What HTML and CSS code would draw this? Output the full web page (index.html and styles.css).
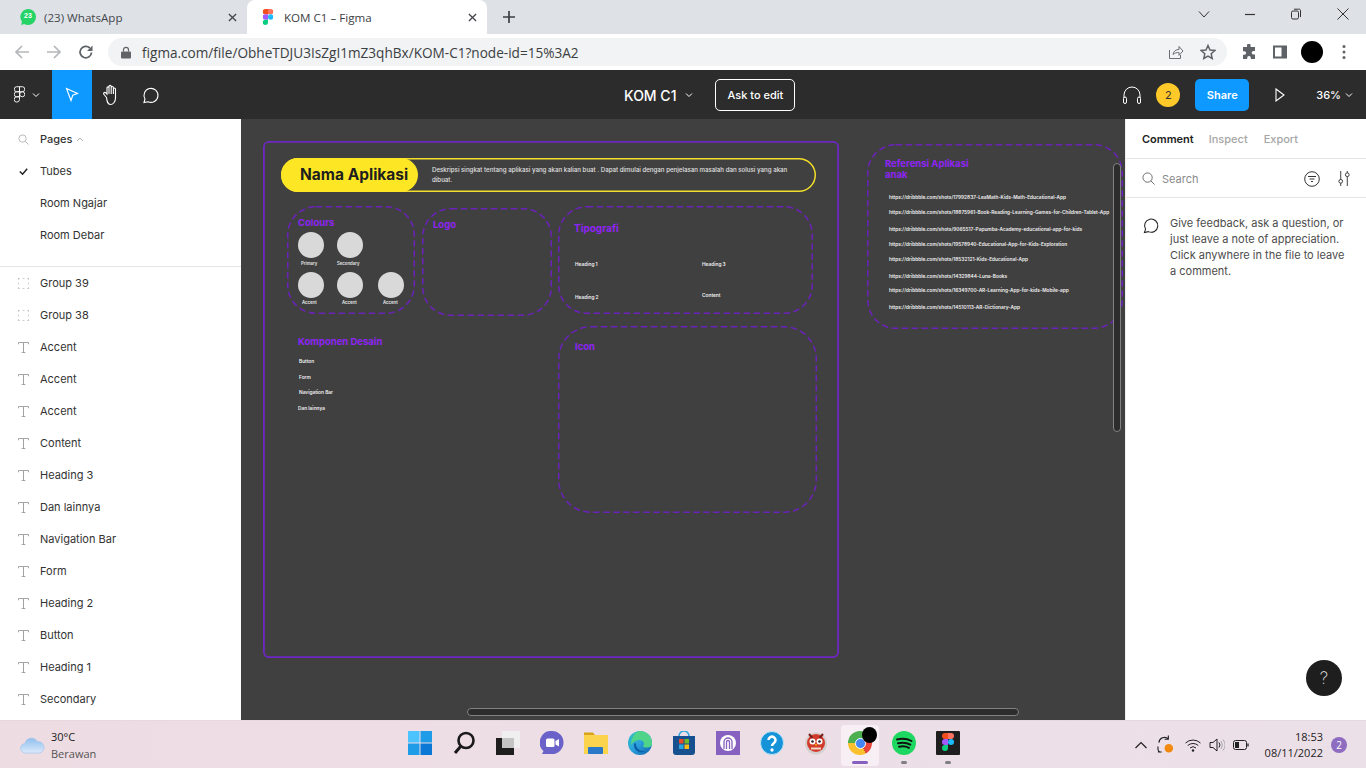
FILE: index.html
```html
<!DOCTYPE html>
<html lang="en">
<head>
<meta charset="utf-8">
<title>KOM C1 – Figma</title>
<link rel="stylesheet" href="styles.css">
</head>
<body>
<svg class="sprite" aria-hidden="true">
  <defs>
    <symbol id="i-t" viewBox="0 0 12 12"><path d="M.5 2.500V.5h11v2M6 .5v11M4 11.500h4" fill="none" stroke="#999"/></symbol>
    <symbol id="i-g" viewBox="0 0 12 12"><path d="M0 .5h2M5 .5h2M10 .5h2M0 11.500h2M5 11.500h2M10 11.500h2M.5 0v2M.5 5v2M.5 10v2M11.500 0v2M11.500 5v2M11.500 10v2" fill="none" stroke="#c4c4c4"/></symbol>
    <symbol id="i-fig" viewBox="0 0 24 36"><path fill="#f24e1e" d="M6 0h6v12H6a6 6 0 0 1 0-12z"/><path fill="#ff7262" d="M12 0h6a6 6 0 0 1 0 12h-6z"/><path fill="#a259ff" d="M6 12h6v12H6a6 6 0 0 1 0-12z"/><circle fill="#1abcfe" cx="18" cy="18" r="6"/><path fill="#0acf83" d="M6 24h6v6a6 6 0 1 1-6-6z"/></symbol>
  </defs>
</svg>

<header class="tabstrip">
  <div class="tab">
    <svg class="fav" viewBox="0 0 16 16"><path fill="#25d366" d="M8 0a8 8 0 0 1 0 16c-1.400 0-2.700-.4-3.800-1L1 16l1-3.200A8 8 0 0 1 8 0z"/></svg>
    <span class="fav-num">23</span>
    <span class="tab-title">(23) WhatsApp</span>
    <svg class="tab-x" viewBox="0 0 10 10"><path d="M1 1l8 8M9 1l-8 8" stroke="#45484d" stroke-width="1.500"/></svg>
  </div>
  <div class="tab tab-active">
    <svg class="fav" viewBox="0 0 24 36"><use href="#i-fig"/></svg>
    <span class="tab-title">KOM C1 – Figma</span>
    <svg class="tab-x" viewBox="0 0 10 10"><path d="M1 1l8 8M9 1l-8 8" stroke="#45484d" stroke-width="1.500"/></svg>
  </div>
  <svg class="newtab" viewBox="0 0 12 12"><path d="M6 0v12M0 6h12" stroke="#3c4043" stroke-width="1.700"/></svg>
  <div class="winbtns">
    <svg class="winb" viewBox="0 0 12 12"><path d="M1 3.500l5 5.500 5-5.500" fill="none" stroke="#333"/></svg>
    <svg class="winb" viewBox="0 0 12 12"><path d="M1 6.500h10" stroke="#333" stroke-width="1.200"/></svg>
    <svg class="winb" viewBox="0 0 12 12"><rect x="1.500" y="3" width="7" height="8" rx="1.500" fill="none" stroke="#333"/><path d="M4 1.200h4.500A1.500 1.500 0 0 1 10.500 3v6" fill="none" stroke="#333"/></svg>
    <svg class="winb" viewBox="0 0 12 12"><path d="M.5.500l11 11M11.500.500l-11 11" stroke="#333"/></svg>
  </div>
</header>

<nav class="addrrow">
  <svg class="nav-ic" viewBox="0 0 16 16"><path d="M15 8H2M8 2L2 8l6 6" fill="none" stroke="#b4b6b9" stroke-width="1.700"/></svg>
  <svg class="nav-ic" viewBox="0 0 16 16"><path d="M1 8h13M8 2l6 6-6 6" fill="none" stroke="#b4b6b9" stroke-width="1.700"/></svg>
  <svg class="nav-ic" viewBox="0 0 16 16"><path d="M13.500 8.500A5.700 5.700 0 1 1 11.800 4" fill="none" stroke="#5f6368" stroke-width="1.800"/><path d="M14.500 1.500v5.500H9z" fill="#5f6368"/></svg>
  <div class="omnibox">
    <svg class="lock" viewBox="0 0 10 12"><rect y="5" width="10" height="7" rx="1" fill="#5f6368"/><path d="M2.500 5V3.300a2.500 2.500 0 0 1 5 0V5" fill="none" stroke="#5f6368" stroke-width="1.200"/></svg>
    <span class="url">figma.com/file/ObheTDJU3IsZgI1mZ3qhBx/KOM-C1?node-id=15%3A2</span>
    <svg class="omni-ic" viewBox="0 0 16 16"><path d="M1.500 6v8.500h11V11" fill="none" stroke="#6a6d72"/><path d="M5 10.500c.5-3.500 3-5 6-5V2.500L15 7l-4 4.300V8.500c-2.500 0-4.500.5-6 2z" fill="none" stroke="#6a6d72"/></svg>
    <svg class="omni-ic" viewBox="0 0 16 16"><path d="M8 1.500l2 4.500 4.800.5-3.600 3.200 1 4.800L8 12l-4.200 2.500 1-4.800L1.200 6.500 6 6z" fill="none" stroke="#5f6368" stroke-width="1.500"/></svg>
  </div>
  <div class="addr-right">
    <svg class="ar-ic" viewBox="0 0 16 16"><path fill="#5f6368" d="M6 1.500a1.800 1.800 0 0 1 3.600 0V3H14v4h-1.500a1.800 1.800 0 0 0 0 3.600H14V15H9.800v-1.300a1.800 1.800 0 0 0-3.600 0V15H2v-4.200h1.300a1.800 1.800 0 0 0 0-3.600H2V3h4z"/></svg>
    <svg class="ar-ic" viewBox="0 0 16 16"><path d="M2 2.500h12v11H2z" fill="none" stroke="#5f6368" stroke-width="2"/><path d="M9.500 2.500H14v11H9.500z" fill="#5f6368"/></svg>
    <span class="avatar"></span>
    <svg class="ar-dots" viewBox="0 0 4 16"><circle cx="2" cy="2.500" r="1.500" fill="#5f6368"/><circle cx="2" cy="8" r="1.500" fill="#5f6368"/><circle cx="2" cy="13.500" r="1.500" fill="#5f6368"/></svg>
  </div>
</nav>

<section class="figbar">
  <div class="fb-left">
    <svg class="fb-logo" viewBox="0 0 12 18"><g fill="none" stroke="#fff"><path d="M3 .5h3v5.500H3a2.750 2.750 0 0 1 0-5.500zM6 .5h3a2.750 2.750 0 0 1 0 5.500H6zM3 6h3v5.500H3A2.750 2.750 0 0 1 3 6z"/><circle cx="9" cy="8.750" r="2.750"/><path d="M3 11.500h3v3a2.900 2.900 0 1 1-3-3z"/></g></svg>
    <svg class="fb-chev" viewBox="0 0 8 6"><path d="M1 1.500l3 3 3-3" fill="none" stroke="#fff"/></svg>
    <div class="tool-on"><svg class="tool-ic" viewBox="0 0 16 16"><path d="M2.500 1.500l11 5-4.700 1.700-1.800 5.300z" fill="none" stroke="#fff" stroke-width="1.100"/></svg></div>
    <svg class="hand" viewBox="0 0 20 22"><path d="M5.500 13.500L3 10.500c-1.200-1.300.6-2.800 1.800-1.600L6 10.200V4c0-1.500 2-1.500 2 0V2.500c0-1.500 2.200-1.500 2.200 0V3.500c0-1.400 2.200-1.400 2.200 0v1.500c0-1.300 2.100-1.300 2.100 0V14c0 4-2.500 6.500-5 6.500-3 0-3.500-3-4-7zM8 4v6M10.200 3.500V10M12.400 5v5" fill="none" stroke="#fff" stroke-width="1.100"/></svg>
    <svg class="bubble" viewBox="0 0 18 18"><path d="M2 16.500l1-3.500a7 7 0 1 1 3 2.700z" fill="none" stroke="#fff" stroke-width="1.100"/></svg>
  </div>
  <div class="fb-center">
    <span class="fb-title">KOM C1</span>
    <svg class="fb-chev2" viewBox="0 0 8 6"><path d="M1 1.500l3 3 3-3" fill="none" stroke="#fff"/></svg>
    <span class="ask">Ask to edit</span>
  </div>
  <div class="fb-right">
    <svg class="phones" viewBox="0 0 20 20"><path d="M2 13V10a8 8 0 0 1 16 0v3" fill="none" stroke="#fff"/><rect x="1.500" y="12" width="3" height="6.500" rx="1.500" fill="none" stroke="#fff"/><rect x="15.500" y="12" width="3" height="6.500" rx="1.500" fill="none" stroke="#fff"/></svg>
    <span class="count">2</span>
    <span class="share">Share</span>
    <svg class="play" viewBox="0 0 10 14"><path d="M1 1l8 6-8 6z" fill="none" stroke="#fff" stroke-width="1.100"/></svg>
    <span class="zoomval">36%</span>
    <svg class="fb-chev3" viewBox="0 0 8 6"><path d="M1 1.500l3 3 3-3" fill="none" stroke="#fff"/></svg>
  </div>
</section>

<main class="app">
  <aside class="left">
    <div class="pages">
      <div class="row row-head">
        <svg class="ic" viewBox="0 0 12 12"><circle cx="5" cy="5" r="4" fill="none" stroke="#b3b3b3"/><path d="M8 8l3.500 3.500" stroke="#b3b3b3"/></svg>
        <span class="pages-label">Pages</span>
        <svg class="up" viewBox="0 0 8 5"><path d="M1 4l3-3 3 3" fill="none" stroke="#b3b3b3"/></svg>
      </div>
      <div class="row"><svg class="ic" viewBox="0 0 12 12"><path d="M2 6l3 3 5-6" fill="none" stroke="#222" stroke-width="1.600"/></svg><span>Tubes</span></div>
      <div class="row"><span class="ic"></span><span>Room Ngajar</span></div>
      <div class="row"><span class="ic"></span><span>Room Debar</span></div>
    </div>
    <div class="layers">
      <div class="row"><svg class="ic"><use href="#i-g"/></svg><span>Group 39</span></div>
      <div class="row"><svg class="ic"><use href="#i-g"/></svg><span>Group 38</span></div>
      <div class="row"><svg class="ic"><use href="#i-t"/></svg><span>Accent</span></div>
      <div class="row"><svg class="ic"><use href="#i-t"/></svg><span>Accent</span></div>
      <div class="row"><svg class="ic"><use href="#i-t"/></svg><span>Accent</span></div>
      <div class="row"><svg class="ic"><use href="#i-t"/></svg><span>Content</span></div>
      <div class="row"><svg class="ic"><use href="#i-t"/></svg><span>Heading 3</span></div>
      <div class="row"><svg class="ic"><use href="#i-t"/></svg><span>Dan lainnya</span></div>
      <div class="row"><svg class="ic"><use href="#i-t"/></svg><span>Navigation Bar</span></div>
      <div class="row"><svg class="ic"><use href="#i-t"/></svg><span>Form</span></div>
      <div class="row"><svg class="ic"><use href="#i-t"/></svg><span>Heading 2</span></div>
      <div class="row"><svg class="ic"><use href="#i-t"/></svg><span>Button</span></div>
      <div class="row"><svg class="ic"><use href="#i-t"/></svg><span>Heading 1</span></div>
      <div class="row"><svg class="ic"><use href="#i-t"/></svg><span>Secondary</span></div>
    </div>
  </aside>

  <div class="canvas">
    <svg class="frame" viewBox="0 0 576 517"><rect x=".9" y=".9" width="574.200" height="515.200" rx="5"/></svg>
    <svg class="pill" viewBox="0 0 535 34"><rect x=".75" y=".75" width="533.500" height="32.500" rx="16.250"/></svg>
    <div class="pill-fill">Nama Aplikasi</div>
    <p class="desc">Deskripsi singkat tentang aplikasi yang akan kalian buat . Dapat dimulai dengan penjelasan masalah dan solusi yang akan dibuat.</p>

    <svg class="dash d-colours" viewBox="0 0 128 108"><rect x=".75" y=".75" width="126.500" height="106.500" rx="28"/></svg>
    <svg class="dash d-logo" viewBox="0 0 130 108"><rect x=".75" y=".75" width="128.500" height="106.500" rx="28"/></svg>
    <svg class="dash d-tipo" viewBox="0 0 255 108"><rect x=".75" y=".75" width="253.500" height="106.500" rx="28"/></svg>
    <svg class="dash d-icon" viewBox="0 0 259 187"><rect x=".75" y=".75" width="257.500" height="185.500" rx="32"/></svg>
    <svg class="dash d-ref" viewBox="0 0 256 185"><rect x=".75" y=".75" width="254.500" height="183.500" rx="28"/></svg>

    <h2 class="hd h-colours">Colours</h2>
    <h2 class="hd h-logo">Logo</h2>
    <h2 class="hd h-tipo">Tipografi</h2>
    <h2 class="hd h-komp">Komponen Desain</h2>
    <h2 class="hd h-icon">Icon</h2>
    <h2 class="hd h-ref">Referensi Aplikasi anak</h2>

    <span class="dot c1"></span><span class="dot c2"></span><span class="dot c3"></span><span class="dot c4"></span><span class="dot c5"></span>
    <span class="tiny t1">Primary</span><span class="tiny t2">Secondary</span><span class="tiny t3">Accent</span><span class="tiny t4">Accent</span><span class="tiny t5">Accent</span>

    <span class="sm s1">Heading 1</span><span class="sm s2">Heading 3</span><span class="sm s3">Heading 2</span><span class="sm s4">Content</span>
    <span class="sm s5">Button</span><span class="sm s6">Form</span><span class="sm s7">Navigation Bar</span><span class="sm s8">Dan lainnya</span>

    <span class="sm l l1">https://dribbble.com/shots/17992837-LeaMath-Kids-Math-Educational-App</span>
    <span class="sm l l2">https://dribbble.com/shots/18875961-Book-Reading-Learning-Games-for-Children-Tablet-App</span>
    <span class="sm l l3">https://dribbble.com/shots/9065517-Papumba-Academy-educational-app-for-kids</span>
    <span class="sm l l4">https://dribbble.com/shots/19578940-Educational-App-for-Kids-Exploration</span>
    <span class="sm l l5">https://dribbble.com/shots/18532121-Kids-Educational-App</span>
    <span class="sm l l6">https://dribbble.com/shots/14329844-Luna-Books</span>
    <span class="sm l l7">https://dribbble.com/shots/16349700-AR-Learning-App-for-kids-Mobile-app</span>
    <span class="sm l l8">https://dribbble.com/shots/14510113-AR-Dictionary-App</span>

    <div class="sb-v"></div>
    <div class="sb-h"></div>
  </div>

  <aside class="right">
    <div class="r-tabs"><span class="r-on">Comment</span><span>Inspect</span><span>Export</span></div>
    <div class="r-search">
      <svg class="r-s" viewBox="0 0 14 14"><circle cx="6" cy="6" r="5" fill="none" stroke="#666"/><path d="M9.500 9.500l4 4" stroke="#666"/></svg>
      <span class="r-sl">Search</span>
      <svg class="r-f" viewBox="0 0 16 16"><circle cx="8" cy="8" r="7.300" fill="none" stroke="#333"/><path d="M4 5.500h8M5.500 8h5M7 10.500h2" stroke="#333"/></svg>
      <svg class="r-a" viewBox="0 0 14 16"><path d="M3.500 0v9M3.500 13v3M10.500 0v2M10.500 6v10" stroke="#333"/><circle cx="3.500" cy="11" r="2" fill="none" stroke="#333"/><circle cx="10.500" cy="4" r="2" fill="none" stroke="#333"/></svg>
    </div>
    <div class="r-msg">
      <svg class="r-b" viewBox="0 0 18 18"><path d="M1.500 16.500l1.200-3.700a7 7 0 1 1 3 2.700z" fill="none" stroke="#222" stroke-width="1.100"/></svg>
      <p>Give feedback, ask a question, or just leave a note of appreciation. Click anywhere in the file to leave a comment.</p>
    </div>
    <span class="help">?</span>
  </aside>
</main>

<footer class="taskbar">
  <div class="weather">
    <svg class="cloud" viewBox="0 0 26 20"><defs><linearGradient id="cl" x1="0" y1="0" x2="0" y2="1"><stop offset="0" stop-color="#8fc0ee"/><stop offset="1" stop-color="#dce9fb"/></linearGradient></defs><path d="M6 19a5 5 0 0 1-1-10 7 7 0 0 1 13-2 6 6 0 0 1 2 12z" fill="url(#cl)" stroke="#9fc2ea" stroke-width=".7"/></svg>
    <div class="w-txt"><span class="w-t">30°C</span><span class="w-s">Berawan</span></div>
  </div>
  <div class="apps">
    <div class="slot"><svg class="app-ic" viewBox="0 0 24 24"><rect width="11.500" height="11.500" fill="#4cc2ff"/><rect x="12.500" width="11.500" height="11.500" fill="#1f9ce8"/><rect y="12.500" width="11.500" height="11.500" fill="#1f9ce8"/><rect x="12.500" y="12.500" width="11.500" height="11.500" fill="#0a78d4"/></svg></div>
    <div class="slot"><svg class="app-ic" viewBox="0 0 24 24"><circle cx="14" cy="9.500" r="7.500" fill="none" stroke="#1a1a1a" stroke-width="2.600"/><path d="M9 15l-6 7" stroke="#1a1a1a" stroke-width="3"/></svg></div>
    <div class="slot"><svg class="app-ic" viewBox="0 0 24 24"><rect y="7" width="18" height="17" fill="#1e1e1e"/><rect x="6" width="18" height="17" fill="#efefef"/><rect x="6" y="7" width="12" height="10" fill="#c4c4c4"/></svg></div>
    <div class="slot"><svg class="app-ic" viewBox="0 0 24 24"><path d="M12 0a11.500 11.500 0 0 1 0 23H2l1.500-3A11.500 11.500 0 0 1 12 0z" fill="#6a62c9"/><rect x="6" y="7.500" width="8.500" height="8.500" rx="1.500" fill="#fff"/><path d="M15.500 10l3.500-2v7.500l-3.500-2z" fill="#fff"/></svg></div>
    <div class="slot"><svg class="app-ic" viewBox="0 0 24 24"><path d="M0 1.500h9l2 2.500H0z" fill="#d9a21b"/><rect y="4" width="24" height="19" fill="#fcd34d"/><rect x="4" y="16" width="15" height="7" rx="1" fill="#2a78c8"/></svg></div>
    <div class="slot"><svg class="app-ic" viewBox="0 0 24 24"><defs><linearGradient id="ed" x1="0" y1="0" x2="1" y2="1"><stop offset="0" stop-color="#34c5c2"/><stop offset=".5" stop-color="#2ba0dc"/><stop offset="1" stop-color="#0c5ea8"/></linearGradient></defs><circle cx="12" cy="12" r="12" fill="url(#ed)"/><path d="M12 0a12 12 0 0 1 12 13c0 2-2 3.500-5 3.500-2 0-4-.5-4-1.500 2-2 1-5.500-3-6-4-.3-7 2-9 5 0-7 4-14 9-14z" fill="#4fd48a"/><path d="M8 13c0 5 5 8 10 7-4 3-12 1-12-6 0-2 1.500-3 2-1z" fill="#0c5ea8"/></svg></div>
    <div class="slot"><svg class="app-ic" viewBox="0 0 24 24"><path d="M7 5a5 5 0 0 1 10 0" fill="none" stroke="#2aa6e0" stroke-width="1.500"/><path d="M1 5h22v16a3 3 0 0 1-3 3H4a3 3 0 0 1-3-3z" fill="#17508e"/><rect x="7" y="8" width="4.500" height="4.500" fill="#ea4a2a"/><rect x="12.500" y="8" width="4.500" height="4.500" fill="#6fb92b"/><rect x="7" y="13.500" width="4.500" height="4.500" fill="#2aa6e0"/><rect x="12.500" y="13.500" width="4.500" height="4.500" fill="#fcb813"/></svg></div>
    <div class="slot"><svg class="app-ic" viewBox="0 0 24 24"><rect width="24" height="24" fill="#8661c0"/><circle cx="12" cy="12" r="8" fill="#fff"/><path d="M8 18v-7a4 4 0 0 1 8 0v7M10.500 18v-7a1.500 1.500 0 0 1 3 0v7" fill="none" stroke="#8661c0" stroke-width="1.300"/></svg></div>
    <div class="slot"><svg class="app-ic" viewBox="0 0 24 24"><circle cx="12" cy="12" r="11.500" fill="#1593d8" stroke="#bfe3f5"/><path d="M8.500 9a3.500 3.500 0 1 1 5.500 3c-1.400 1-2 1.500-2 3" fill="none" stroke="#fff" stroke-width="2.600"/><circle cx="12" cy="19" r="1.700" fill="#fff"/></svg></div>
    <div class="slot"><svg class="app-ic" viewBox="0 0 24 24"><circle cx="12" cy="12.500" r="11" fill="#d3d0cf"/><circle cx="12" cy="12" r="9" fill="#d23a2c"/><path d="M5 3l3.500 4M19 3l-3.500 4" stroke="#7a1d18" stroke-width="2"/><circle cx="8.500" cy="10.500" r="3" fill="#fff"/><circle cx="15.500" cy="10.500" r="3" fill="#fff"/><circle cx="8.500" cy="10.500" r="1.300" fill="#222"/><circle cx="15.500" cy="10.500" r="1.300" fill="#222"/><path d="M10.500 13h3L12 15.500z" fill="#f2a51c"/><path d="M7 17.500h10" stroke="#f2d7c7" stroke-width="2"/></svg></div>
    <div class="slot slot-on">
      <span class="chrome"><span class="chrome-in"></span></span>
      <span class="blob"></span>
      <span class="ind ind-on"></span>
    </div>
    <div class="slot"><svg class="app-ic" viewBox="0 0 24 24"><circle cx="12" cy="12" r="12" fill="#1ed760"/><path d="M5 8.500c5-1.500 10-1 14.500 1.500M6 12.300c4.500-1.200 8.500-.8 12.300 1.300M7 15.800c3.500-.9 7-.6 10 1" fill="none" stroke="#111" stroke-width="2" stroke-linecap="round"/></svg><span class="ind"></span></div>
    <div class="slot"><svg class="app-ic" viewBox="0 0 24 24"><rect width="24" height="24" rx="1" fill="#1e1e1e"/><svg x="6" y="1" width="12" height="20" viewBox="0 0 24 36"><use href="#i-fig"/></svg></svg><span class="ind"></span></div>
  </div>
  <div class="tray">
    <svg class="tr-up" viewBox="0 0 12 8"><path d="M.5 7L6 1.500 11.500 7" fill="none" stroke="#222" stroke-width="1.200"/></svg>
    <svg class="tr-sync" viewBox="0 0 18 20"><path d="M2 8a6 6 0 0 1 10-4M12 .5V4.500H8M1 12v3a4 4 0 0 0 2 3M1 18h4" fill="none" stroke="#222" stroke-width="1.200"/><circle cx="12.500" cy="14" r="4.500" fill="#f28a10"/></svg>
    <svg class="tr-wifi" viewBox="0 0 16 14"><path d="M.5 5a11 11 0 0 1 15 0M2.700 7.500a8 8 0 0 1 10.600 0M5 10a4.500 4.500 0 0 1 6 0" fill="none" stroke="#222"/><circle cx="8" cy="12.500" r="1.200" fill="#222"/></svg>
    <svg class="tr-vol" viewBox="0 0 16 14"><path d="M1 4.500h3L8 1v12L4 9.500H1z" fill="none" stroke="#222"/><path d="M10 4.500a4 4 0 0 1 0 5" fill="none" stroke="#222"/><path d="M12 3a7 7 0 0 1 0 8M14 1.500a9 9 0 0 1 0 11" fill="none" stroke="#aaa"/></svg>
    <svg class="tr-bat" viewBox="0 0 16 10"><rect x=".5" y=".5" width="13" height="9" rx="2" fill="none" stroke="#222"/><rect x="2" y="2" width="4" height="6" fill="#222"/><path d="M15 3.500v3" stroke="#222" stroke-width="1.300"/></svg>
    <div class="clock"><span>18:53</span><span>08/11/2022</span></div>
    <span class="notif">2</span>
  </div>
</footer>
</body>
</html>
```

FILE: styles.css
```css
* { box-sizing: border-box; margin: 0; padding: 0; }
html, body { width: 1366px; height: 768px; overflow: hidden; }
body { display: flex; flex-direction: column; font-family: "Inter", "Liberation Sans", sans-serif; background: #fff; }
.sprite { position: absolute; width: 0; height: 0; }
svg { display: block; flex: none; }

/* tab strip */
.tabstrip { height: 34px; flex: none; background: #dee1e6; display: flex; position: relative; padding-left: 8px; font-family: "Open Sans", sans-serif; font-size: 11.600px; color: #45484d; }
.tab { width: 239px; height: 34px; display: flex; align-items: center; padding: 0 8px 0 12px; position: relative; }
.tab-active { background: #fff; border-radius: 8px 8px 0 0; width: 240px; color: #3c4043; padding-left: 13px; }
.fav { width: 16px; height: 16px; margin-right: 8px; }
.fav-num { position: absolute; left: 15px; top: 12px; width: 10px; text-align: center; font: 700 7px "Liberation Sans", sans-serif; color: #fff; }
.tab-title { flex: 1; white-space: nowrap; }
.tab-x { width: 9px; height: 9px; margin-right: 2px; }
.newtab { width: 12px; height: 12px; margin: 11px 0 0 16px; }
.winbtns { margin-left: auto; display: flex; align-items: flex-start; }
.winb { width: 12px; height: 12px; margin-top: 8px; }
.winb:nth-child(1) { margin-right: 34px; }
.winb:nth-child(2) { margin-right: 34px; }
.winb:nth-child(3) { margin-right: 35px; }
.winb:nth-child(4) { margin-right: 17px; }

/* address row */
.addrrow { height: 36px; flex: none; background: #fff; display: flex; align-items: center; padding: 0 0 0 14px; }
.nav-ic { width: 16px; height: 16px; margin-right: 16px; }
.nav-ic:nth-child(3) { margin-right: 14px; }
.omnibox { width: 1119px; height: 28px; border-radius: 14px; background: #f1f3f4; display: flex; align-items: center; padding-left: 13px; }
.lock { width: 10px; height: 13px; margin-right: 11px; }
.url { flex: 1; font: 13.600px "Open Sans", sans-serif; color: #3c4043; white-space: nowrap; }
.omni-ic { width: 16px; height: 16px; margin-right: 16px; }
.omni-ic:last-child { margin-right: 11px; }
.addr-right { display: flex; align-items: center; margin-left: 14px; }
.ar-ic { width: 16px; height: 16px; margin-right: 15px; }
.ar-ic + .ar-ic { margin-right: 14px; }
.avatar { width: 22px; height: 22px; border-radius: 50%; background: #000; margin: 0 19px 0 -1px; }
.ar-dots { width: 4px; height: 16px; }

/* figma bar */
.figbar { height: 49px; flex: none; background: #2c2c2c; color: #fff; position: relative; display: flex; align-items: center; justify-content: space-between; }
.fb-left { display: flex; align-items: center; height: 49px; padding-left: 14px; }
.fb-logo { width: 11px; height: 17px; }
.fb-chev { width: 8px; height: 6px; margin: 0 12px 0 7px; }
.tool-on { width: 40px; height: 49px; background: #0d99ff; display: flex; align-items: center; justify-content: center; }
.tool-ic { width: 16px; height: 16px; }
.hand { width: 20px; height: 22px; margin-left: 9px; }
.bubble { width: 18px; height: 18px; margin-left: 21px; }
.fb-center { position: absolute; left: 624px; top: 0; height: 49px; display: flex; align-items: center; }
.fb-title { font-size: 14px; font-weight: 500; padding-top: 1px; }
.fb-chev2 { width: 8px; height: 6px; margin: 0 22px 0 9px; }
.ask { width: 80px; height: 32px; border: 1px solid #fff; border-radius: 5px; font-size: 11px; font-weight: 500; display: flex; align-items: center; justify-content: center; }
.fb-right { display: flex; align-items: center; padding-right: 13px; }
.phones { width: 20px; height: 20px; }
.count { width: 24px; height: 24px; border-radius: 50%; background: #ffc929; color: #333; font-size: 11px; display: flex; align-items: center; justify-content: center; margin: 0 15px 0 14px; }
.share { width: 54px; height: 32px; border-radius: 5px; background: #0d99ff; font-size: 11px; font-weight: 600; display: flex; align-items: center; justify-content: center; }
.play { width: 10px; height: 14px; margin: 0 31px 0 26px; }
.zoomval { font-size: 11px; font-weight: 500; }
.fb-chev3 { width: 8px; height: 6px; margin-left: 4px; }

/* app */
.app { height: 601px; flex: none; display: flex; }
.left { width: 241px; flex: none; background: #fff; overflow: hidden; font-size: 11px; color: #333; }
.pages { height: 148px; border-bottom: 1px solid #e5e5e5; padding-top: 4px; }
.row { height: 32px; display: flex; align-items: center; padding-left: 18px; white-space: nowrap; }
.ic { width: 11px; height: 11px; margin-right: 11px; flex: none; }
.pages-label { font-weight: 500; }
.up { width: 8px; height: 5px; margin-left: 4px; }

.canvas { width: 884px; flex: none; background: #404040; position: relative; overflow: hidden; }
.frame { position: absolute; left: 22px; top: 22px; width: 576px; height: 517px; fill: none; stroke: #6d27c2; stroke-width: 1.800; }
.pill { position: absolute; left: 40px; top: 39px; width: 535px; height: 34px; fill: none; stroke: #f2dd2a; stroke-width: 1.500; }
.pill-fill { position: absolute; left: 40px; top: 39px; width: 137px; height: 34px; border-radius: 17px; background: #fde725; color: #1e1e1e; font-size: 15.500px; font-weight: 700; line-height: 34px; padding-left: 19px; white-space: nowrap; }
.desc { position: absolute; left: 191px; top: 46px; width: 358px; font: 500 6.150px/9.500px "Inter", sans-serif; color: #e0e0e0; }
.dash { position: absolute; fill: none; stroke: #6a22b8; stroke-width: 1.500; stroke-dasharray: 6.500 3.500; }
.d-colours { left: 46px; top: 87px; width: 128px; height: 108px; }
.d-logo { left: 181px; top: 89px; width: 130px; height: 108px; }
.d-tipo { left: 317px; top: 87px; width: 255px; height: 108px; }
.d-icon { left: 317px; top: 207px; width: 259px; height: 187px; }
.d-ref { left: 626px; top: 25px; width: 256px; height: 185px; }
.hd { position: absolute; font-size: 9.500px; line-height: 11px; font-weight: 700; color: #8f24f5; white-space: nowrap; }
.h-colours { left: 57px; top: 98px; }
.h-logo { left: 192px; top: 100px; }
.h-tipo { left: 333px; top: 104px; font-size: 10px; }
.h-komp { left: 57px; top: 217px; }
.h-icon { left: 334px; top: 222px; }
.h-ref { left: 644px; top: 39px; width: 100px; white-space: normal; }
.dot { position: absolute; width: 26px; height: 26px; border-radius: 50%; background: #d9d9d9; }
.c1 { left: 57px; top: 113px; }
.c2 { left: 96px; top: 113px; }
.c3 { left: 57px; top: 153px; }
.c4 { left: 96px; top: 153px; }
.c5 { left: 137px; top: 153px; }
.tiny { position: absolute; font-size: 4.300px; line-height: 6px; font-weight: 600; color: #e6e6e6; white-space: nowrap; }
.t1 { left: 60px; top: 142px; }
.t2 { left: 96px; top: 142px; }
.t3 { left: 61px; top: 181px; }
.t4 { left: 101px; top: 181px; }
.t5 { left: 142px; top: 181px; }
.sm { position: absolute; font-size: 4.800px; line-height: 6px; font-weight: 600; color: #f0f0f0; white-space: nowrap; }
.s1 { left: 334px; top: 142px; }
.s2 { left: 461px; top: 142px; }
.s3 { left: 334px; top: 175px; }
.s4 { left: 461px; top: 173px; }
.s5 { left: 58px; top: 239px; }
.s6 { left: 58px; top: 255px; }
.s7 { left: 58px; top: 270px; }
.s8 { left: 57px; top: 286px; }
.l { left: 648px; }
.l1 { top: 75px; }
.l2 { top: 90px; }
.l3 { top: 107px; }
.l4 { top: 122px; }
.l5 { top: 137px; }
.l6 { top: 154px; }
.l7 { top: 168px; }
.l8 { top: 185px; }
.sb-v { position: absolute; left: 872px; top: 44px; width: 8px; height: 269px; border: 1px solid #828282; border-radius: 4px; background: #2c2c2c; }
.sb-h { position: absolute; left: 226px; top: 589px; width: 552px; height: 8px; border: 1px solid #828282; border-radius: 4px; background: #2c2c2c; }

/* right panel */
.right { width: 241px; flex: none; background: #fff; border-left: 1px solid #eee; position: relative; font-size: 11px; }
.r-tabs { height: 40px; display: flex; align-items: center; gap: 15px; padding-left: 16px; border-bottom: 1px solid #e5e5e5; color: #a6a6a6; font-weight: 500; }
.r-tabs span + span + span { margin-left: 1px; }
.r-on { color: #222; font-weight: 600; }
.r-search { height: 39px; display: flex; align-items: center; padding: 1px 0 0 16px; border-bottom: 1px solid #e5e5e5; color: #8a8a8a; }
.r-s { width: 13px; height: 13px; margin-right: 7px; }
.r-sl { flex: 1; }
.r-f { width: 16px; height: 16px; margin-right: 17px; }
.r-a { width: 14px; height: 15px; margin-right: 15px; }
.r-msg { display: flex; padding: 17px 20px 0 17px; }
.r-b { width: 17px; height: 17px; margin: 2px 10px 0 0; }
.r-msg p { font-size: 11px; line-height: 16px; color: #4c4c4c; width: 185px; }
.help { position: absolute; left: 180px; top: 541px; width: 36px; height: 36px; border-radius: 50%; background: #1e1e1e; color: #e6e6e6; font-size: 17px; font-weight: 200; display: flex; align-items: center; justify-content: center; }

/* taskbar */
.taskbar { height: 48px; flex: none; background: linear-gradient(90deg, #eedce3, #ece0e8); border-top: 1px solid #e6d8de; display: flex; font-family: "Open Sans", sans-serif; position: relative; }
.weather { width: 398px; flex: none; display: flex; align-items: center; padding-left: 20px; }
.cloud { width: 25px; height: 19px; margin-right: 6px; }
.w-txt { display: flex; flex-direction: column; font-size: 11px; line-height: 17px; }
.w-t { color: #222; }
.w-s { color: #555; }
.apps { display: flex; width: 572px; flex: none; }
.slot { width: 44px; height: 47px; position: relative; display: flex; align-items: center; justify-content: center; padding-bottom: 3px; }
.app-ic { width: 24px; height: 24px; }
.slot-on::before { content: ""; position: absolute; left: 3px; top: 4px; width: 38px; height: 41px; background: #f7eff3; border-radius: 4px; }
.chrome { position: relative; width: 24px; height: 24px; border-radius: 50%; background: conic-gradient(from 30deg, #e8453c 0 120deg, #fbc02d 120deg 240deg, #4caf50 240deg 360deg); display: flex; align-items: center; justify-content: center; }
.chrome-in { width: 9px; height: 9px; border-radius: 50%; background: #4285f4; border: 1.500px solid #fff; box-sizing: content-box; }
.blob { position: absolute; left: 23.500px; top: 6px; width: 15px; height: 16px; border-radius: 50%; background: #000; }
.ind { position: absolute; left: 19px; top: 40px; width: 6px; height: 3px; border-radius: 2px; background: #7f7f7f; }
.ind-on { left: 14px; width: 16px; background: #8661c0; }
.tray { flex: 1; display: flex; align-items: center; padding-left: 165px; font-size: 12px; color: #222; }
.tr-up { width: 12px; height: 8px; margin-right: 10px; }
.tr-sync { width: 17px; height: 19px; margin-right: 11px; }
.tr-wifi { width: 16px; height: 14px; margin-right: 8px; }
.tr-vol { width: 16px; height: 14px; margin-right: 8px; }
.tr-bat { width: 16px; height: 10px; }
.clock { width: 74px; display: flex; flex-direction: column; align-items: flex-end; line-height: 16px; font-size: 11px; padding-top: 1px; }
.notif { width: 16px; height: 16px; border-radius: 50%; background: #8e6cbf; color: #fff; font-size: 10px; display: flex; align-items: center; justify-content: center; margin-left: 8px; }
```
